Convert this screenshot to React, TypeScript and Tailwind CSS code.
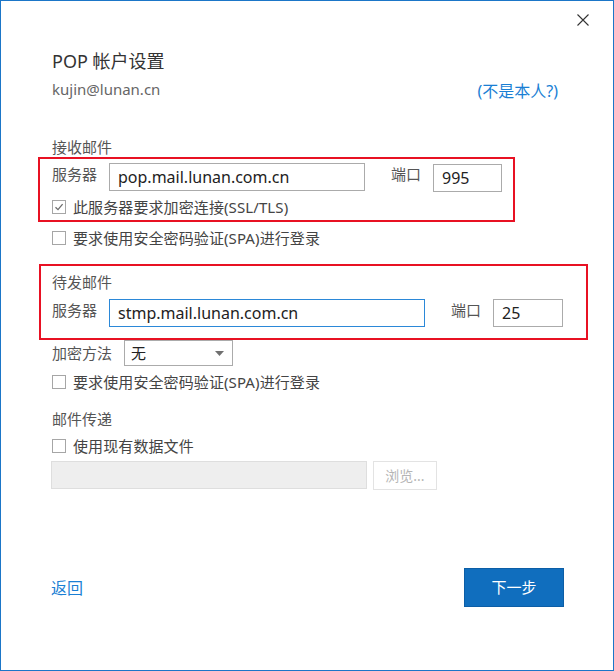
import React from "react";

const FONT = "font-['Noto_Sans','Noto_Sans_CJK_SC',sans-serif]";

function Checkbox({ checked }: { checked?: boolean }) {
  return (
    <span className="w-[14px] h-[14px] border border-[#a6a6a6] bg-white flex items-center justify-center shrink-0">
      {checked && (
        <svg width="10" height="10" viewBox="0 0 10 10">
          <path d="M1.5 5.2 L4 7.6 L8.6 2.2" fill="none" stroke="#6b6b6b" strokeWidth="1.3" />
        </svg>
      )}
    </span>
  );
}

function CheckRow({ label, checked, className }: { label: string; checked?: boolean; className?: string }) {
  return (
    <div className={`flex items-center h-[20px] gap-[7px] ${className ?? ""}`}>
      <Checkbox checked={checked} />
      <span className="text-[15px] leading-[20px] tracking-[0.1px] text-[#444]">{label}</span>
    </div>
  );
}

export default function App() {
  return (
    <div className={`w-[614px] h-[671px] border border-[#1b76c8] bg-white flex flex-col ${FONT}`}>
      <div className="h-[38px] flex justify-end items-center pr-[24px]">
        <svg width="12" height="12" viewBox="0 0 12 12">
          <path d="M0.5 0.5 L11.5 11.5 M11.5 0.5 L0.5 11.5" stroke="#333" strokeWidth="1.1" />
        </svg>
      </div>
      <div className="mt-[10px] ml-[51px] h-[24px] text-[18px] leading-[24px] text-[#333]">POP 帐户设置</div>
      <div className="mt-[6px] ml-[51px] mr-[55px] h-[20px] flex justify-between">
        <span className="text-[15px] leading-[20px] text-[#666]">kujin@lunan.cn</span>
        <span className="text-[16px] leading-[20px] text-[#1a7fd4] pt-[2px]">(不是本人?)</span>
      </div>
      <div className="mt-[38px] ml-[51px] h-[20px] text-[15px] leading-[20px] text-[#555]">接收邮件</div>

      <div className="ml-[37px] w-[477px] h-[65px] border-2 border-[#e81123] pl-[12px] pt-[4px]">
        <div className="flex items-start h-[28px]">
          <span className="w-[57px] pt-[1px] text-[15px] leading-[20px] text-[#555]">服务器</span>
          <div className="w-[256px] h-[28px] border border-[#ababab] flex items-center pl-[8px] text-[16px] text-[#222]">pop.mail.lunan.com.cn</div>
          <span className="ml-[26px] w-[42px] pt-[1px] text-[15px] leading-[20px] text-[#555]">端口</span>
          <div className="mt-[1px] w-[69px] h-[28px] border border-[#ababab] flex items-center pl-[8px] text-[16px] text-[#222]">995</div>
        </div>
        <CheckRow className="mt-[6px]" checked label="此服务器要求加密连接(SSL/TLS)" />
      </div>

      <CheckRow className="mt-[6px] ml-[51px]" label="要求使用安全密码验证(SPA)进行登录" />

      <div className="mt-[16px] ml-[38px] w-[549px] h-[76px] border-2 border-[#e81123] pl-[11px] pt-[6px]">
        <div className="h-[20px] text-[15px] leading-[20px] text-[#555]">待发邮件</div>
        <div className="mt-[7px] flex items-start h-[28px]">
          <span className="w-[57px] pt-[1px] text-[15px] leading-[20px] text-[#555]">服务器</span>
          <div className="w-[316px] h-[28px] border border-[#2b88d8] flex items-center pl-[8px] text-[16px] text-[#222]">stmp.mail.lunan.com.cn</div>
          <span className="ml-[26px] w-[42px] pt-[1px] text-[15px] leading-[20px] text-[#555]">端口</span>
          <div className="w-[70px] h-[28px] border border-[#ababab] flex items-center pl-[8px] text-[16px] text-[#222]">25</div>
        </div>
      </div>

      <div className="ml-[51px] flex items-center h-[26px]">
        <span className="w-[72px] text-[15px] leading-[20px] text-[#555]">加密方法</span>
        <div className="w-[109px] h-[26px] border border-[#ababab] flex items-center justify-between pl-[6px] pr-[8px]">
          <span className="text-[15px] text-[#222]">无</span>
          <svg width="9" height="5" viewBox="0 0 9 5">
            <path d="M0 0 L9 0 L4.5 5 Z" fill="#707070" />
          </svg>
        </div>
      </div>

      <CheckRow className="mt-[6px] ml-[51px]" label="要求使用安全密码验证(SPA)进行登录" />

      <div className="mt-[17px] ml-[51px] h-[20px] text-[15px] leading-[20px] text-[#555]">邮件传递</div>
      <CheckRow className="mt-[7px] ml-[51px]" label="使用现有数据文件" />

      <div className="mt-[5px] ml-[50px] flex items-start gap-[6px]">
        <div className="w-[316px] h-[28px] bg-[#eeeeee] border border-[#dedede]" />
        <div className="w-[64px] h-[29px] border border-[#e3e3e3] bg-white flex items-center justify-center text-[14px] text-[#b5b5b5]">浏览...</div>
      </div>

      <div className="mt-[78px] ml-[50px] mr-[49px] flex items-center justify-between">
        <span className="text-[16px] leading-[20px] text-[#1a7fd4]">返回</span>
        <div className="w-[100px] h-[39px] bg-[#106ebe] border border-[#0c5ea6] flex items-center justify-center text-[15px] text-white">下一步</div>
      </div>
    </div>
  );
}
